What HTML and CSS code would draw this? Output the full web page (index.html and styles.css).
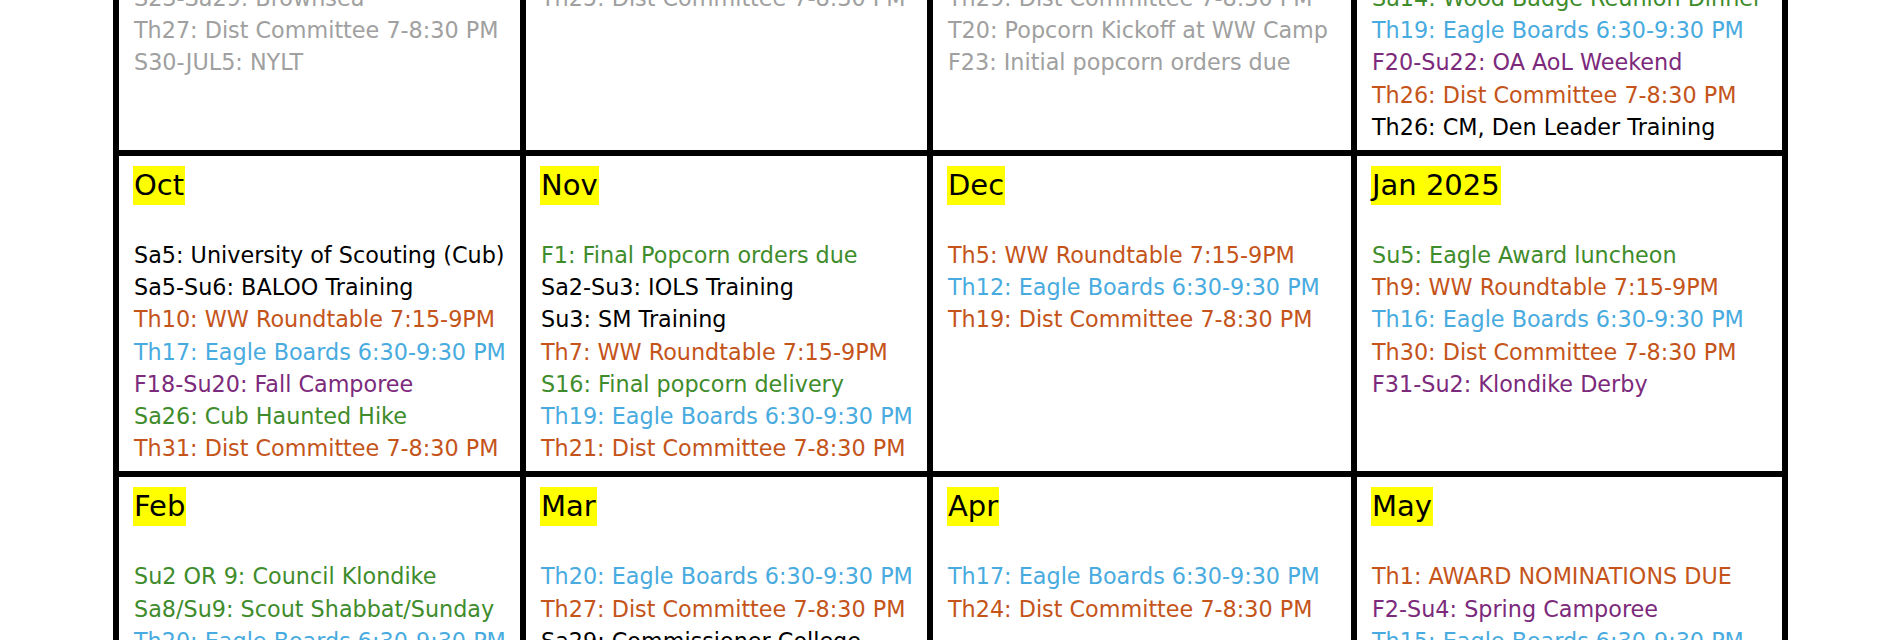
FILE: index.html
```html
<!DOCTYPE html>
<html lang="en">
<head>
<meta charset="utf-8">
<title>District Calendar 2024-2025</title>
<link rel="stylesheet" href="styles.css">
</head>
<body>
<div class="page">
  <div class="cal">
    <div class="cell past">
      <div class="month"><span class="hl">Jun</span></div>
      <ul class="events">
        <li>S23-Sa29: Brownsea</li>
        <li>Th27: Dist Committee 7-8:30 PM</li>
        <li>S30-JUL5: NYLT</li>
      </ul>
    </div>
    <div class="cell past">
      <div class="month"><span class="hl">Jul</span></div>
      <ul class="events">
        <li>Th25: Dist Committee 7-8:30 PM</li>
      </ul>
    </div>
    <div class="cell past">
      <div class="month"><span class="hl">Aug</span></div>
      <ul class="events">
        <li>Th29: Dist Committee 7-8:30 PM</li>
        <li>T20: Popcorn Kickoff at WW Camp</li>
        <li>F23: Initial popcorn orders due</li>
      </ul>
    </div>
    <div class="cell">
      <div class="month"><span class="hl">Sep</span></div>
      <ul class="events">
        <li class="green">Sa14: Wood Badge Reunion Dinner</li>
        <li class="blue">Th19: Eagle Boards 6:30-9:30 PM</li>
        <li class="purple">F20-Su22: OA AoL Weekend</li>
        <li class="orange">Th26: Dist Committee 7-8:30 PM</li>
        <li>Th26: CM, Den Leader Training</li>
      </ul>
    </div>

    <div class="cell">
      <div class="month"><span class="hl">Oct</span></div>
      <ul class="events">
        <li>Sa5: University of Scouting (Cub)</li>
        <li>Sa5-Su6: BALOO Training</li>
        <li class="orange">Th10: WW Roundtable 7:15-9PM</li>
        <li class="blue">Th17: Eagle Boards 6:30-9:30 PM</li>
        <li class="purple">F18-Su20: Fall Camporee</li>
        <li class="green">Sa26: Cub Haunted Hike</li>
        <li class="orange">Th31: Dist Committee 7-8:30 PM</li>
      </ul>
    </div>
    <div class="cell">
      <div class="month"><span class="hl">Nov</span></div>
      <ul class="events">
        <li class="green">F1: Final Popcorn orders due</li>
        <li>Sa2-Su3: IOLS Training</li>
        <li>Su3: SM Training</li>
        <li class="orange">Th7: WW Roundtable 7:15-9PM</li>
        <li class="green">S16: Final popcorn delivery</li>
        <li class="blue">Th19: Eagle Boards 6:30-9:30 PM</li>
        <li class="orange">Th21: Dist Committee 7-8:30 PM</li>
      </ul>
    </div>
    <div class="cell">
      <div class="month"><span class="hl">Dec</span></div>
      <ul class="events">
        <li class="orange">Th5: WW Roundtable 7:15-9PM</li>
        <li class="blue">Th12: Eagle Boards 6:30-9:30 PM</li>
        <li class="orange">Th19: Dist Committee 7-8:30 PM</li>
      </ul>
    </div>
    <div class="cell">
      <div class="month"><span class="hl">Jan 2025</span></div>
      <ul class="events">
        <li class="green">Su5: Eagle Award luncheon</li>
        <li class="orange">Th9: WW Roundtable 7:15-9PM</li>
        <li class="blue">Th16: Eagle Boards 6:30-9:30 PM</li>
        <li class="orange">Th30: Dist Committee 7-8:30 PM</li>
        <li class="purple">F31-Su2: Klondike Derby</li>
      </ul>
    </div>

    <div class="cell">
      <div class="month"><span class="hl">Feb</span></div>
      <ul class="events">
        <li class="green">Su2 OR 9: Council Klondike</li>
        <li class="green">Sa8/Su9: Scout Shabbat/Sunday</li>
        <li class="blue">Th20: Eagle Boards 6:30-9:30 PM</li>
        <li class="orange">Th27: Dist Committee 7-8:30 PM</li>
      </ul>
    </div>
    <div class="cell">
      <div class="month"><span class="hl">Mar</span></div>
      <ul class="events">
        <li class="blue">Th20: Eagle Boards 6:30-9:30 PM</li>
        <li class="orange">Th27: Dist Committee 7-8:30 PM</li>
        <li>Sa29: Commissioner College</li>
      </ul>
    </div>
    <div class="cell">
      <div class="month"><span class="hl">Apr</span></div>
      <ul class="events">
        <li class="blue">Th17: Eagle Boards 6:30-9:30 PM</li>
        <li class="orange">Th24: Dist Committee 7-8:30 PM</li>
      </ul>
    </div>
    <div class="cell">
      <div class="month"><span class="hl">May</span></div>
      <ul class="events">
        <li class="orange">Th1: AWARD NOMINATIONS DUE</li>
        <li class="purple">F2-Su4: Spring Camporee</li>
        <li class="blue">Th15: Eagle Boards 6:30-9:30 PM</li>
        <li class="orange">Th29: Dist Committee 7-8:30 PM</li>
      </ul>
    </div>
  </div>
</div>
</body>
</html>
```

FILE: styles.css
```css
html, body {
  margin: 0;
  padding: 0;
  background: #ffffff;
}

body {
  font-family: "DejaVu Sans", "Liberation Sans", sans-serif;
  color: #000000;
  height: 640px;
  overflow: hidden;
}

.page {
  margin-left: 113px;
  margin-top: -107px;
}

.cal {
  display: grid;
  grid-template-columns: 401px 401px 418px 425px;
  gap: 6px;
  padding: 6px;
  background: #000000;
  width: max-content;
}

.cell {
  background: #ffffff;
  padding: 10px 6px 7px 14px;
  overflow: hidden;
}

.month {
  height: 39px;
  margin-bottom: 34px;
  font-size: 29px;
  line-height: 39px;
}

.hl {
  display: inline-block;
  background: #ffff00;
  padding: 0 1px;
}

.events {
  list-style: none;
  margin: 0;
  padding: 0 0 0 1px;
  font-size: 22.3px;
  line-height: 32.2px;
  white-space: nowrap;
}

.past .events,
.past .month {
  color: #a0a0a0;
}

.orange { color: #c4541a; }
.blue { color: #48abe0; }
.green { color: #3f8c2c; }
.purple { color: #7c2a7c; }
```
